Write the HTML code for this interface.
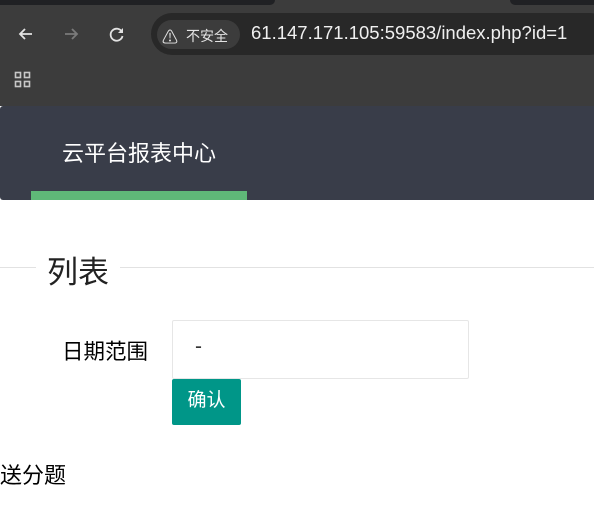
<!DOCTYPE html>
<html><head><meta charset="utf-8"><style>
body{margin:0;width:594px;height:520px;overflow:hidden;background:#fff;font-family:"Liberation Sans","Noto Sans CJK SC",sans-serif;position:relative}
.a{position:absolute;white-space:nowrap}
</style></head><body>
<div class="a" style="left:0;top:0;width:594px;height:106px;background:#3c3c3c"></div>
<div class="a" style="left:0;top:0;width:275px;height:5px;background:#202124;border-radius:0 0 8px 0"></div>
<div class="a" style="left:510px;top:0;width:84px;height:5px;background:#202124;border-radius:0 0 0 8px"></div>
<svg class="a" style="left:16px;top:24px" width="20" height="20" viewBox="0 0 20 20"><path d="M16 10H4M9 5L4 10l5 5" stroke="#e3e3e3" stroke-width="1.8" fill="none"/></svg>
<svg class="a" style="left:61px;top:24px" width="20" height="20" viewBox="0 0 20 20"><path d="M4 10h12M11 5l5 5-5 5" stroke="#7a7a7a" stroke-width="1.8" fill="none"/></svg>
<svg class="a" style="left:107px;top:24px" width="20" height="20" viewBox="0 0 20 20"><path d="M15 8A6 6 0 1 0 15.5 12" stroke="#e3e3e3" stroke-width="1.8" fill="none"/><path d="M16 4v5h-5" fill="#e3e3e3"/></svg>
<div class="a" style="left:151px;top:13px;width:460px;height:42px;background:#282828;border-radius:21px"></div>
<div class="a" style="left:157px;top:20px;width:83px;height:29px;background:#3c3c3c;border-radius:15px"></div>
<div class="a" style="left:162px;top:24px;color:#e3e3e3;font-size:16px">⚠</div>
<div class="a" style="left:186px;top:26px;color:#e3e3e3;font-size:14px">不安全</div>
<div class="a" style="left:251px;top:22px;color:#f0f0f0;font-size:18.5px">61.147.171.105:59583/index.php?id=1</div>
<svg class="a" style="left:14px;top:71px" width="18" height="18" viewBox="0 0 18 18" fill="none" stroke="#c8c8c8" stroke-width="1.6"><rect x="1.5" y="1.5" width="5" height="5"/><rect x="10.5" y="1.5" width="5" height="5"/><rect x="1.5" y="10.5" width="5" height="5"/><rect x="10.5" y="10.5" width="5" height="5"/></svg>
<div class="a" style="left:0;top:106px;width:594px;height:94px;background:#393d49;border-radius:3px 0 0 3px"></div>
<div class="a" style="left:62px;top:136px;color:#fff;font-size:22px">云平台报表中心</div>
<div class="a" style="left:31px;top:191px;width:216px;height:9px;background:#5fb878"></div>
<div class="a" style="left:0;top:267px;width:594px;height:1px;background:#e2e2e2"></div>
<div class="a" style="left:36px;top:247px;padding:0 11px;background:#fff;font-size:31px;color:#222">列表</div>
<div class="a" style="left:62px;top:335px;font-size:21.5px;color:#000">日期范围</div>
<div class="a" style="left:172px;top:320px;width:295px;height:57px;border:1px solid #e6e6e6;border-radius:2px"></div>
<div class="a" style="left:195px;top:335px;font-size:21px;color:#333">-</div>
<div class="a" style="left:172px;top:379px;width:69px;height:46px;background:#009688;border-radius:2px;color:#fff;font-size:19px;text-align:center;line-height:44px">确认</div>
<div class="a" style="left:0;top:458px;font-size:22px;color:#000">送分题</div>
</body></html>
